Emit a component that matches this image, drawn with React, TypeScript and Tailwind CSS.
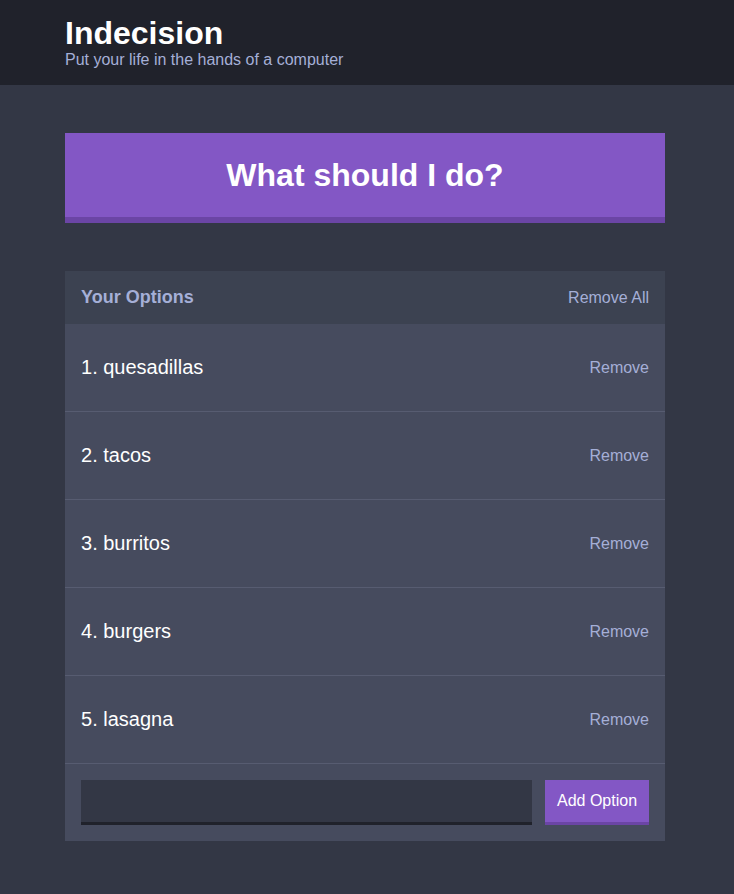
import React from "react";

const options = ["quesadillas", "tacos", "burritos", "burgers", "lasagna"];

export default function App() {
  return (
    <div className="min-h-[894px] bg-[#333745] font-['Liberation_Sans',Arial,sans-serif]">
      <header className="h-[85px] bg-[#20222b] pl-[65px] pt-[14px]">
        <h1 className="text-[32px] font-bold leading-[38px] text-white">Indecision</h1>
        <h2 className="text-[16px] leading-[16px] text-[#a5afd7]">Put your life in the hands of a computer</h2>
      </header>
      <div className="ml-[65px] w-[600px] pt-[48px]">
        <button className="block h-[90px] w-full border-b-[6px] border-[#6b45a5] bg-[#8357c5] text-[32px] font-bold text-white">
          What should I do?
        </button>
        <div className="mt-[48px] bg-[#464b5e]">
          <div className="flex h-[53px] items-center justify-between bg-[#3c4251] px-[16px]">
            <h3 className="text-[18px] font-bold text-[#a5afd7]">Your Options</h3>
            <button className="text-[16px] text-[#a5afd7]">Remove All</button>
          </div>
          {options.map((o, i) => (
            <div key={o} className="flex h-[88px] items-center justify-between border-b border-[#575c71] px-[16px]">
              <p className="pb-[2px] text-[20px] text-white">
                {i + 1}. {o}
              </p>
              <button className="text-[16px] text-[#a5afd7]">Remove</button>
            </div>
          ))}
          <form className="flex items-stretch gap-[13px] p-[16px]">
            <input className="h-[45px] flex-1 border-b-[3px] border-[#20222b] bg-[#333745] text-white outline-none" />
            <button
              type="button"
              className="h-[45px] w-[104px] border-b-[3px] border-[#6b45a5] bg-[#8357c5] text-[16px] text-white"
            >
              Add Option
            </button>
          </form>
        </div>
      </div>
    </div>
  );
}
